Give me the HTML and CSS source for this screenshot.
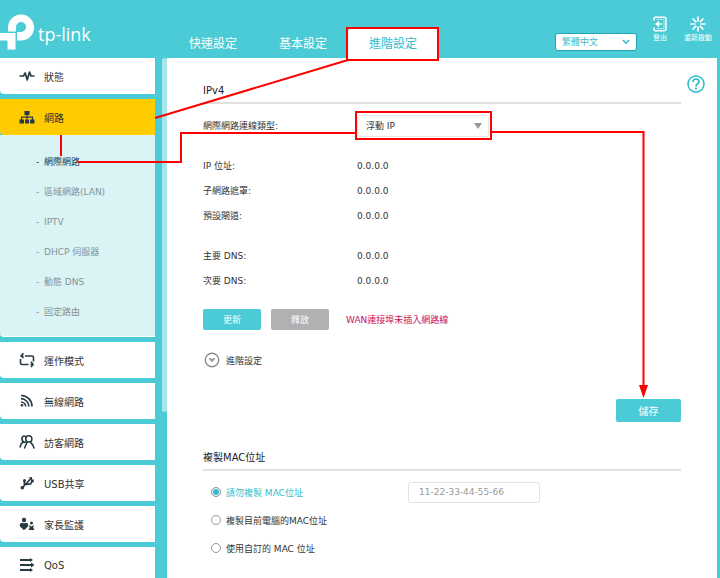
FILE: index.html
```html
<!DOCTYPE html>
<html lang="zh-Hant">
<head>
<meta charset="utf-8">
<meta name="viewport" content="width=device-width, initial-scale=1">
<title>tp-link</title>
<link rel="stylesheet" href="styles.css">
</head>
<body>
<header class="header">
  <a class="logo" href="#">
    <svg width="36" height="38" viewBox="0 13 36 38" fill="#fff" aria-hidden="true"><path d="M8 31.500V27A13 13 0 1 1 21 40.500H17V32h4a5 5 0 1 0-5-5v4.500z"/><path d="M0 33h15.500v16.500H7.500v-9H0z"/></svg>
    <span>tp-link</span>
  </a>
  <nav class="tabs">
    <a href="#">快速設定</a>
    <a href="#">基本設定</a>
    <a href="#" class="active">進階設定</a>
  </nav>
  <div class="tools">
    <div class="picker language">
      <select aria-label="語言"><option>繁體中文</option></select>
      <svg width="8" height="6" viewBox="0 0 8 6" fill="none" stroke="#35bccb" stroke-width="1.600"><path d="M.8 1L4 4.200 7.200 1"/></svg>
    </div>
    <button class="tool" type="button">
      <svg width="16" height="16" viewBox="0 0 16 16" fill="none" stroke="#fff" stroke-width="1.500"><path d="M2 4.500V3q0-1.700 1.700-1.700h8.600Q14 1.300 14 3v10q0 1.700-1.700 1.700H3.700Q2 14.700 2 13v-1.500"/><path d="M4.500 3.300h6.500q1 0 1 1v7.400q0 1-1 1H4.500" stroke-width=".6"/><path d="M4 8h6"/><path d="M7 4.800v6.400L3 8z" fill="#fff" stroke="none"/></svg>
      登出
    </button>
    <button class="tool" type="button">
      <svg width="16" height="16" viewBox="0 0 16 16" stroke="#fff" stroke-width="1.700" stroke-linecap="round"><path d="M8 1v4M8 11v4M1 8h4M11 8h4M3 3l2.700 2.700M10.300 10.300L13 13M3 13l2.700-2.700M10.300 5.700L13 3"/></svg>
      重新啟動
    </button>
  </div>
</header>

<div class="layout">
  <nav class="sidebar">
    <a class="item" href="#"><svg class="icon" viewBox="0 0 16 16" fill="none" stroke="#273a42" stroke-width="1.700" stroke-linejoin="round"><path d="M.5 8h4l1.700-3 2 7 2.300-8 1.500 4h3.500"/></svg>狀態</a>
    <div class="group">
      <a class="item current" href="#"><svg class="icon" viewBox="0 0 16 16" fill="#273a42"><path d="M5.500 2h5v4h-5zM.5 10.500H5v4H.5zM11 10.500h4.500v4H11z"/><path d="M6 10.500h4v4H6z"/><path d="M8 5v5.500M2.500 11V8.200h11V11" fill="none" stroke="#273a42" stroke-width="1.200"/></svg>網路</a>
      <ul class="submenu">
        <li class="selected"><a href="#">網際網路</a></li>
        <li><a href="#">區域網路(LAN)</a></li>
        <li><a href="#">IPTV</a></li>
        <li><a href="#">DHCP 伺服器</a></li>
        <li><a href="#">動態 DNS</a></li>
        <li><a href="#">固定路由</a></li>
      </ul>
    </div>
    <a class="item" href="#"><svg class="icon" viewBox="0 0 16 16" fill="none" stroke="#273a42" stroke-width="1.600"><path d="M6 4h7q1.500 0 1.500 1.500V9.500M4.500 1.300L2 4l2.500 2M9.500 12.500H3q-1.500 0-1.500-1.500V7M12 9.800l2 2.700-2 2.500"/><path d="M2 4h2.500M11.500 12.500H14"/></svg>運作模式</a>
    <a class="item" href="#"><svg class="icon" viewBox="0 0 16 16" fill="none" stroke="#273a42" stroke-width="1.700"><path d="M2 2.500A11 11 0 0 1 13 13.500M2 5.700a8 8 0 0 1 7.900 7.800M2 9a4.700 4.700 0 0 1 4.700 4.500"/><circle cx="3" cy="12.300" r="1.300" fill="#273a42" stroke="none"/></svg>無線網路</a>
    <a class="item" href="#"><svg class="icon" viewBox="0 0 16 16" fill="none" stroke="#273a42" stroke-width="1.500" stroke-linecap="round"><circle cx="9.800" cy="4.900" r="3.100"/><path d="M5.500 14L8 8.500M11.500 8.500q2.500 1.500 3.500 5.500M6.500 2.500Q4.800 1.500 3.500 2.800 2 5 4 7.500M4.500 7.500Q2 9 1 13M5 8.500q2-1 3 0"/></svg>訪客網路</a>
    <a class="item" href="#"><svg class="icon" viewBox="0 0 16 16" fill="none" stroke="#273a42" stroke-width="1.700"><path d="M3.500 12.500L11.500 4M5.500 10.500L5.300 6.300M7 9.500l4.500-.6 1.800-3"/><circle cx="3.300" cy="12.700" r="1.800" fill="#273a42" stroke="none"/><circle cx="5.500" cy="5.500" r="1.500" fill="#273a42" stroke="none"/><path d="M9.700 2.500l3.500-.5-.4 3.700zM12 4.500h2.800v2.800H12z" fill="#273a42" stroke="none"/></svg>USB共享</a>
    <a class="item" href="#"><svg class="icon" viewBox="0 0 16 16" fill="#273a42"><circle cx="5" cy="4" r="2.200"/><path d="M5 14.300L1 10.400Q0 8.500 1.500 7.200 3.500 6 5 7.600 6.500 6 8.500 7.200 10 8.500 9 10.400z"/><circle cx="12.500" cy="7" r="1.500"/><path d="M12.500 10.500L10 9l.8 2.500L9.500 14h6l-1.300-2.500L15 9z"/></svg>家長監護</a>
    <a class="item" href="#"><svg class="icon" viewBox="0 0 16 16" fill="#273a42" stroke="#273a42" stroke-width="1.800"><path d="M1 3h11M1 8h12M1 13h11"/><path d="M11 1L14 3l-3 2zM12 5.500L15.500 8 12 10.500zM11 11l3 2-3 2z" stroke="none"/></svg>QoS</a>
  </nav>
  <div class="track"><div class="thumb"></div></div>

  <main class="content">
    <button class="help" type="button" aria-label="說明">
      <svg width="20" height="20" viewBox="0 0 20 20" fill="none" stroke="#2bbccc" stroke-width="1.500"><circle cx="10" cy="10" r="8"/><path d="M7 8q0-3 3-3t3 2.500q0 1.500-1.500 2.300T10 12.500" stroke-width="1.700"/><circle cx="10" cy="14.500" r="1.100" fill="#2bbccc" stroke="none"/></svg>
    </button>
    <h2>IPv4</h2>
    <form>
      <div class="row type">
        <label for="wan">網際網路連線類型:</label>
        <div class="picker wan">
          <select id="wan"><option>浮動 IP</option></select>
          <svg width="8" height="6" viewBox="0 0 8 6" fill="#999"><path d="M0 0h8L4 6z"/></svg>
        </div>
      </div>
      <dl>
        <div class="row"><dt>IP 位址:</dt><dd>0.0.0.0</dd></div>
        <div class="row"><dt>子網路遮罩:</dt><dd>0.0.0.0</dd></div>
        <div class="row"><dt>預設閘道:</dt><dd>0.0.0.0</dd></div>
      </dl>
      <dl>
        <div class="row"><dt>主要 DNS:</dt><dd>0.0.0.0</dd></div>
        <div class="row"><dt>次要 DNS:</dt><dd>0.0.0.0</dd></div>
      </dl>
      <div class="actions">
        <button class="button" type="button">更新</button>
        <button class="button muted" type="button">釋放</button>
        <span class="warning">WAN連接埠未插入網路線</span>
      </div>
      <button class="more" type="button">
        <svg width="16" height="16" viewBox="0 0 16 16" fill="none" stroke="#8d8d8d" stroke-width="1.400"><circle cx="8" cy="8" r="6.700"/><path d="M4.500 6.500L6 5.700l2 1.200 2-1.200 1.500.8L8 10.300z" fill="#999" stroke="none"/></svg>
        進階設定
      </button>
      <div class="save"><button class="button" type="button">儲存</button></div>
    </form>

    <h2>複製MAC位址</h2>
    <form class="mac">
      <div class="choice">
        <label><input type="radio" name="mac" checked>請勿複製 MAC位址</label>
        <input class="address" type="text" aria-label="MAC位址" value="11-22-33-44-55-66" disabled>
      </div>
      <div class="choice"><label><input type="radio" name="mac">複製目前電腦的MAC位址</label></div>
      <div class="choice"><label><input type="radio" name="mac">使用自訂的 MAC 位址</label></div>
    </form>
  </main>
</div>

<!-- Guide lines from the tab to the menu entry, the connection type and the save button -->
<svg class="guide" width="720" height="578" viewBox="0 0 720 578" fill="none" stroke="#f00" stroke-width="2" aria-hidden="true">
  <path d="M347 28h91v32h-91zM356 112h135v27H356z"/>
  <path d="M348 60L155 118"/>
  <path d="M61 135v21M78 162h103v-29h175M491 132h152.500v256"/>
  <path d="M639 385h9l-4.500 13z" fill="#f00" stroke="none"/>
</svg>
</body>
</html>
```

FILE: styles.css
```css
* { box-sizing: border-box; }

body {
  margin: 0;
  height: 100vh;
  display: flex;
  flex-direction: column;
  overflow: hidden;
  background: #4acbd6;
  color: #333;
  font-family: "DejaVu Sans", "Noto Sans CJK TC", sans-serif;
  font-size: 9px;
}

a { color: inherit; text-decoration: none; }
button, input, select { font: inherit; color: inherit; margin: 0; }
button { border: 0; padding: 0; background: none; }

.header {
  flex: none;
  display: flex;
  align-items: flex-end;
  height: 58px;
  color: #fff;
}

.logo {
  display: flex;
  align-items: center;
  gap: 2px;
  width: 168px;
  height: 52px;
  font: 500 18px/20px "Open Sans", sans-serif;
}
.logo span { padding-top: 4px; }

.tabs { display: flex; font-size: 12px; }
.tabs a {
  width: 90px;
  padding-top: 3px;
  line-height: 27px;
  text-align: center;
  white-space: nowrap;
}
.tabs .active {
  background: #fff;
  color: #35bccb;
  border-radius: 4px 4px 0 0;
}

.tools {
  display: flex;
  align-items: flex-end;
  margin-left: auto;
  padding: 0 3px 7px 0;
}
.tool {
  display: flex;
  flex-direction: column;
  align-items: center;
  gap: 1px;
  width: 38px;
  margin-bottom: 8px;
  font-size: 7px;
  line-height: 10px;
  white-space: nowrap;
}

.picker { position: relative; }
.picker select {
  width: 100%;
  height: 100%;
  appearance: none;
  border: 1px solid #e5e5e5;
  border-radius: 3px;
  background: #fff;
  padding: 0 20px 0 8px;
}
.picker svg {
  position: absolute;
  right: 7px;
  top: 50%;
  translate: 0 -50%;
  pointer-events: none;
}
.language { width: 82px; height: 18px; margin-right: 4px; }
.language select {
  border-color: #20a5b0;
  padding-left: 6px;
  color: #35bccb;
}
.wan { width: 132px; height: 22px; }

.layout { flex: 1; min-height: 0; display: flex; padding-right: 3px; }

.sidebar {
  width: 155px;
  display: flex;
  flex-direction: column;
  gap: 5px;
  overflow: hidden;
}
.item {
  flex: none;
  display: flex;
  align-items: center;
  gap: 9px;
  height: 36px;
  padding-left: 19px;
  border-radius: 0 0 0 4px;
  background: #fff;
  font-size: 10px;
}
.icon { width: 16px; height: 16px; }
.current { background: #fc0; }

.submenu {
  margin: 0;
  padding: 12px 0 9px;
  list-style: none;
  background: #daf4f6;
  border-bottom: 1px solid #fff;
  border-radius: 0 0 0 4px;
  color: #849295;
}
.submenu li { padding-left: 36px; line-height: 30px; }
.submenu li::before { content: "-"; display: inline-block; width: 8px; }
.submenu .selected { color: #21363c; }

.track { width: 12px; padding-left: 7px; }
.thumb { height: 68%; border-radius: 3px; background: #a5e6eb; }

.content {
  flex: 1;
  position: relative;
  padding: 22px 36px 0;
  background: #fff;
}
.help { position: absolute; right: 11px; top: 16px; }
.help svg { display: block; }

h2 {
  margin: 0;
  border-bottom: 2px solid #e0e0e0;
  font-size: 10px;
  font-weight: normal;
  line-height: 22px;
  color: #222;
}

.row {
  display: grid;
  grid-template-columns: 154px 1fr;
  align-items: center;
  height: 25px;
}
.type { margin-top: 9px; }
dl { margin: 15px 0 0; }
dd { margin: 0; }

.button {
  width: 58px;
  height: 21px;
  border-radius: 2px;
  background: #4acbd6;
  color: #fff;
}
.muted { background: #b1b1b1; }
.actions {
  display: flex;
  align-items: center;
  gap: 10px;
  margin-top: 16px;
}
.warning { margin-left: 7px; color: #c8125f; }

.more {
  display: flex;
  align-items: center;
  gap: 6px;
  height: 22px;
  margin-top: 19px;
  padding-left: 1px;
}
.save {
  display: flex;
  justify-content: flex-end;
  margin: 28px 0 25px;
}
.save .button { width: 65px; height: 23px; font-size: 10px; }

.mac { margin-top: 7px; }
.choice {
  display: grid;
  grid-template-columns: 197px 132px;
  align-items: center;
  height: 28px;
  padding-left: 8px;
}
.choice label { display: flex; align-items: center; gap: 5px; }
.choice label:has(:checked) { color: #35bccb; }
.choice [type="radio"] {
  appearance: none;
  width: 10px;
  height: 10px;
  border: 1px solid #999;
  border-radius: 50%;
  background: #fff;
}
.choice [type="radio"]:checked {
  background: #35bccb;
  box-shadow: inset 0 0 0 1px #fff;
}
.address {
  width: 132px;
  height: 21px;
  padding: 0 10px;
  border: 1px solid #e3e3e3;
  border-radius: 3px;
  background: #fff;
  color: #999;
}

.guide {
  position: absolute;
  left: 0;
  top: 0;
  pointer-events: none;
}
```
